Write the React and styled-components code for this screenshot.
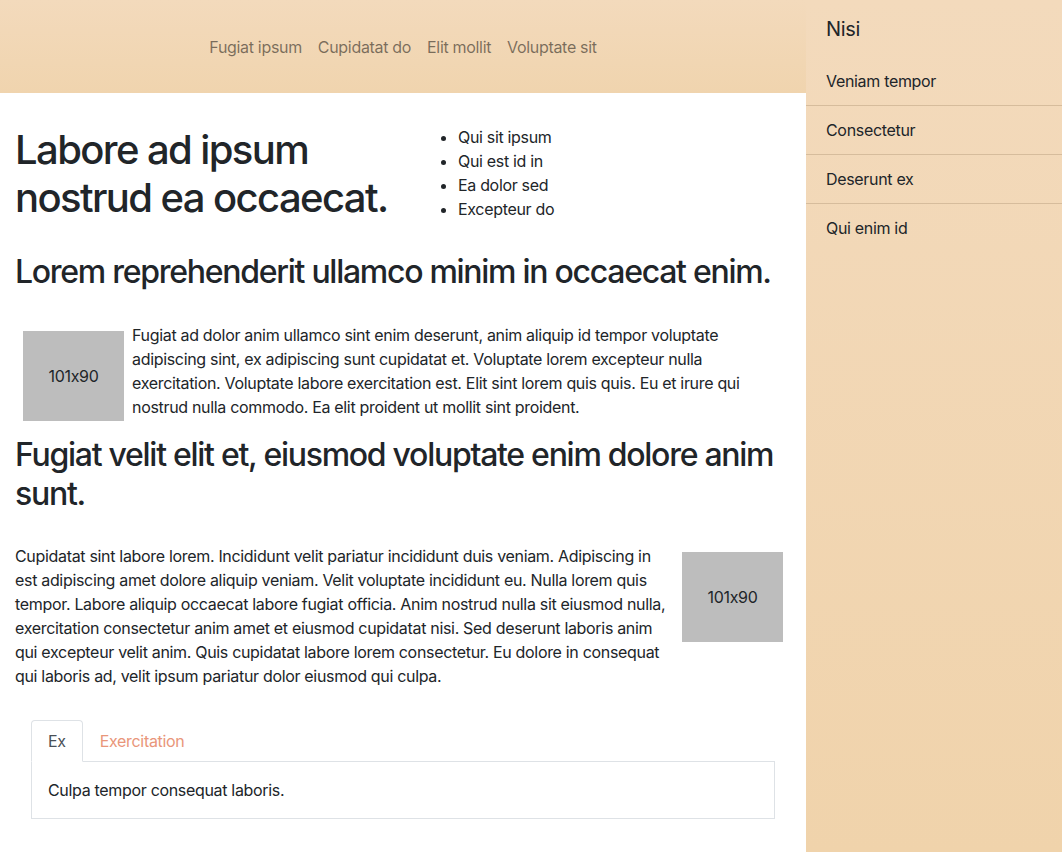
import React, { useState } from 'react'
import styled, { createGlobalStyle } from 'styled-components'

const GlobalStyle = createGlobalStyle`
    * { box-sizing: border-box; }
    body {
        margin: 0;
        font-family: Inter, "Noto Sans", sans-serif;
        font-feature-settings: "calt" 0;
        font-size: 16px;
        line-height: 1.5;
        letter-spacing: -0.02em;
        color: #212529;
        background: #fff;
    }
`
const Page = styled.div`
    display: flex;
    min-height: 852px;
`
const Main = styled.div`
    width: 806px;
    flex-shrink: 0;
`
const Header = styled.header`
    height: 93px;
    background: linear-gradient(#f3dabc, #f0d4ae);
    display: flex;
    align-items: center;
    justify-content: center;
`
const NavLink = styled.a`
    padding: 0 8px;
    color: rgba(0, 0, 0, 0.5);
    text-decoration: none;
`
const Content = styled.div`
    padding: 32px 15px 0;
`
const Row = styled.div`
    display: flex;
    margin: 0 -15px;
`
const Col = styled.div`
    flex: 0 0 50%;
    padding: 0 15px;
`
const Title = styled.h1`
    margin: 1px 0 8px;
    font-size: 40px;
    font-weight: 500;
    line-height: 1.2;
    letter-spacing: -0.04em;
`
const List = styled.ul`
    margin: 0 0 16px;
    padding-left: 40px;
`
const Heading = styled.h2`
    margin: ${p => p.$top || 0}px 0 8px;
    font-size: 32px;
    font-weight: 500;
    line-height: 1.2;
    letter-spacing: -0.04em;
`
const Media = styled.div`
    margin: ${p => p.$float ? '31px 0 0' : '32px 0 1px'};
    display: ${p => p.$float ? 'block' : 'flex'};
    align-items: flex-start;
`
const Placeholder = styled.div`
    width: 101px;
    height: 90px;
    flex-shrink: 0;
    margin: 8px;
    float: ${p => p.$right ? 'right' : 'none'};
    background: #bdbdbd;
    display: flex;
    align-items: center;
    justify-content: center;
    color: #212529;
`
const Text = styled.p`
    margin: 0 0 16px;
`
const Tabs = styled.div`
    margin: 32px 16px 16px;
    clear: both;
`
const TabNav = styled.div`
    display: flex;
    border-bottom: 1px solid #dee2e6;
`
const Tab = styled.button`
    font: inherit;
    letter-spacing: inherit;
    background: ${p => p.$active ? '#fff' : 'transparent'};
    color: ${p => p.$active ? '#495057' : '#e9967a'};
    border: 1px solid transparent;
    border-color: ${p => p.$active ? '#dee2e6 #dee2e6 #fff' : 'transparent'};
    border-radius: 4px 4px 0 0;
    padding: 8px 16px;
    margin-bottom: -1px;
    cursor: pointer;
    outline: none;
`
const TabPane = styled.div`
    border: 1px solid #dee2e6;
    border-top: 0;
    padding: 16px;
`
const Sidebar = styled.aside`
    flex: 1;
    background: linear-gradient(#f3dabc, #f0d3ab);
    padding-top: 17px;
`
const SideTitle = styled.h5`
    margin: 0 0 16px;
    padding: 0 20px;
    font-size: 20px;
    font-weight: 400;
    line-height: 1.2;
`
const SideItem = styled.a`
    display: block;
    padding: 12px 20px;
    color: #212529;
    text-decoration: none;
    border-top: ${p => p.$first ? '0' : '1px solid #d6bc9c'};
`

export default function App() {
    const [tab, setTab] = useState(0)
    const panes = ['Culpa tempor consequat laboris.', 'Exercitation ullamco.']
    return (
        <Page>
            <GlobalStyle />
            <Main>
                <Header>
                    <NavLink href="#">Fugiat ipsum</NavLink>
                    <NavLink href="#">Cupidatat do</NavLink>
                    <NavLink href="#">Elit mollit</NavLink>
                    <NavLink href="#">Voluptate sit</NavLink>
                </Header>
                <Content>
                    <Row>
                        <Col>
                            <Title>Labore ad ipsum nostrud ea occaecat.</Title>
                        </Col>
                        <Col>
                            <List>
                                <li>Qui sit ipsum</li>
                                <li>Qui est id in</li>
                                <li>Ea dolor sed</li>
                                <li>Excepteur do</li>
                            </List>
                        </Col>
                    </Row>
                    <Heading $top={16}>Lorem reprehenderit ullamco minim in occaecat enim.</Heading>
                    <Media>
                        <Placeholder>101x90</Placeholder>
                        <Text>Fugiat ad dolor anim ullamco sint enim deserunt, anim aliquip id tempor voluptate adipiscing sint, ex adipiscing sunt cupidatat et. Voluptate lorem excepteur nulla exercitation. Voluptate labore exercitation est. Elit sint lorem quis quis. Eu et irure qui nostrud nulla commodo. Ea elit proident ut mollit sint proident.</Text>
                    </Media>
                    <Heading>Fugiat velit elit et, eiusmod voluptate enim dolore anim sunt.</Heading>
                    <Media $float>
                        <Placeholder $right>101x90</Placeholder>
                        <Text>Cupidatat sint labore lorem. Incididunt velit pariatur incididunt duis veniam. Adipiscing in est adipiscing amet dolore aliquip veniam. Velit voluptate incididunt eu. Nulla lorem quis tempor. Labore aliquip occaecat labore fugiat officia. Anim nostrud nulla sit eiusmod nulla, exercitation consectetur anim amet et eiusmod cupidatat nisi. Sed deserunt laboris anim qui excepteur velit anim. Quis cupidatat labore lorem consectetur. Eu dolore in consequat qui laboris ad, velit ipsum pariatur dolor eiusmod qui culpa.</Text>
                    </Media>
                    <Tabs>
                        <TabNav>
                            <Tab $active={tab === 0} onClick={() => setTab(0)}>Ex</Tab>
                            <Tab $active={tab === 1} onClick={() => setTab(1)}>Exercitation</Tab>
                        </TabNav>
                        <TabPane>{panes[tab]}</TabPane>
                    </Tabs>
                </Content>
            </Main>
            <Sidebar>
                <SideTitle>Nisi</SideTitle>
                <SideItem href="#" $first>Veniam tempor</SideItem>
                <SideItem href="#">Consectetur</SideItem>
                <SideItem href="#">Deserunt ex</SideItem>
                <SideItem href="#">Qui enim id</SideItem>
            </Sidebar>
        </Page>
    )
}
